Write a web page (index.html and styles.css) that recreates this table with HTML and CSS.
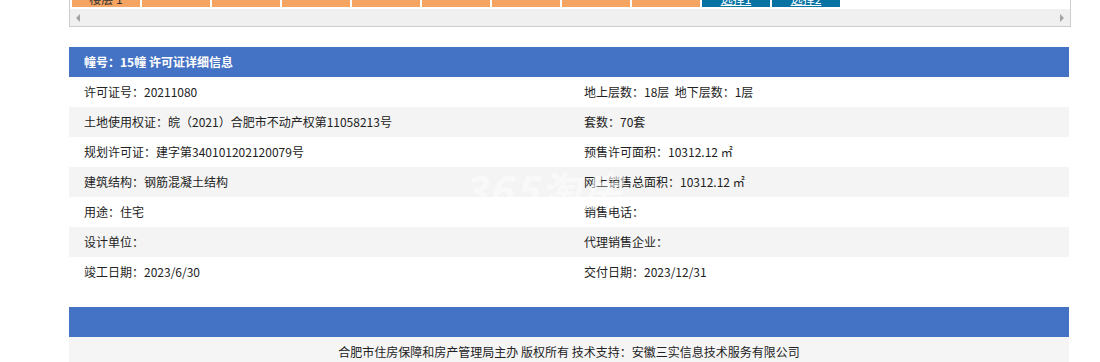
FILE: index.html
```html
<!DOCTYPE html>
<html lang="zh-CN">
<head>
<meta charset="utf-8">
<title>许可证详细信息</title>
<link rel="stylesheet" href="styles.css">
</head>
<body>
<div class="page">
  <div class="scrollbox">
    <div class="cells">
      <div class="cell orange">楼层 1</div>
      <div class="cell orange"></div>
      <div class="cell orange"></div>
      <div class="cell orange"></div>
      <div class="cell orange"></div>
      <div class="cell orange"></div>
      <div class="cell orange"></div>
      <div class="cell orange"></div>
      <div class="cell orange"></div>
      <div class="cell blue"><a>选择1</a></div>
      <div class="cell blue"><a>选择2</a></div>
    </div>
    <div class="hscroll">
      <span class="arrow left"></span>
      <span class="arrow right"></span>
    </div>
  </div>

  <div class="info">
    <div class="info-head">幢号：15幢 许可证详细信息</div>
    <div class="grid">
      <div class="c">许可证号：20211080</div>
      <div class="c">地上层数：18层&nbsp;&nbsp;地下层数：1层</div>
      <div class="c alt">土地使用权证：皖（2021）合肥市不动产权第11058213号</div>
      <div class="c alt">套数：70套</div>
      <div class="c">规划许可证：建字第340101202120079号</div>
      <div class="c">预售许可面积：10312.12 ㎡</div>
      <div class="c alt">建筑结构：钢筋混凝土结构</div>
      <div class="c alt">网上销售总面积：10312.12 ㎡</div>
      <div class="c">用途：住宅</div>
      <div class="c">销售电话：</div>
      <div class="c alt">设计单位：</div>
      <div class="c alt">代理销售企业：</div>
      <div class="c">竣工日期：2023/6/30</div>
      <div class="c">交付日期：2023/12/31</div>
    </div>
    <div class="watermark">365淘房</div>
  </div>

  <div class="footer-bar"></div>
  <div class="footer-text">合肥市住房保障和房产管理局主办 版权所有 技术支持：安徽三实信息技术服务有限公司</div>
</div>
</body>
</html>
```

FILE: styles.css
```css
html, body {
  margin: 0;
  padding: 0;
  background: #fff;
}
body {
  font-family: "Microsoft YaHei", "Noto Sans CJK SC", "Noto Sans", sans-serif;
  font-size: 12px;
  color: #222;
}
.page {
  width: 1000px;
  margin-left: 69px;
}
.scrollbox {
  width: 1000px;
  margin-top: -24px;
  border: 1px solid #cccccc;
  border-top: none;
}
.cells {
  display: flex;
  gap: 2px;
  padding: 0 0 2px 2px;
}
.cell {
  width: 68px;
  height: 31px;
  padding-top: 15px;
  line-height: 16px;
  text-align: center;
  font-size: 12px;
  box-sizing: border-box;
  overflow: hidden;
}
.cell.orange {
  background: #f6a462;
  color: #333;
}
.cell.blue {
  background: #0873a3;
  color: #fff;
}
.cell.blue a {
  color: #fff;
  text-decoration: underline;
}
.hscroll {
  height: 17px;
  background: #f0f0f0;
  display: flex;
  align-items: center;
  justify-content: space-between;
  padding: 0 6px;
}
.arrow {
  width: 0;
  height: 0;
  border-top: 4px solid transparent;
  border-bottom: 4px solid transparent;
}
.arrow.left {
  border-right: 4px solid #a3a3a3;
}
.arrow.right {
  border-left: 4px solid #a3a3a3;
}

.info {
  position: relative;
  margin-top: 20px;
}
.info-head {
  height: 30px;
  line-height: 30px;
  background: #4472c4;
  color: #fff;
  font-weight: bold;
  font-size: 12px;
  padding-left: 15px;
}
.grid {
  display: grid;
  grid-template-columns: 500px 500px;
}
.c {
  height: 30px;
  line-height: 30px;
  padding-left: 15px;
  background: #fff;
  white-space: nowrap;
}
.c.alt {
  background: #f4f4f4;
}
.watermark {
  position: absolute;
  left: 394px;
  top: 113px;
  font-size: 40px;
  font-weight: bold;
  font-style: italic;
  color: rgba(255, 255, 255, 0.55);
  letter-spacing: 2px;
  pointer-events: none;
}
.footer-bar {
  margin-top: 20px;
  height: 30px;
  background: #4472c4;
}
.footer-text {
  height: 30px;
  line-height: 30px;
  background: #f5f5f5;
  text-align: center;
  color: #222;
}
```
